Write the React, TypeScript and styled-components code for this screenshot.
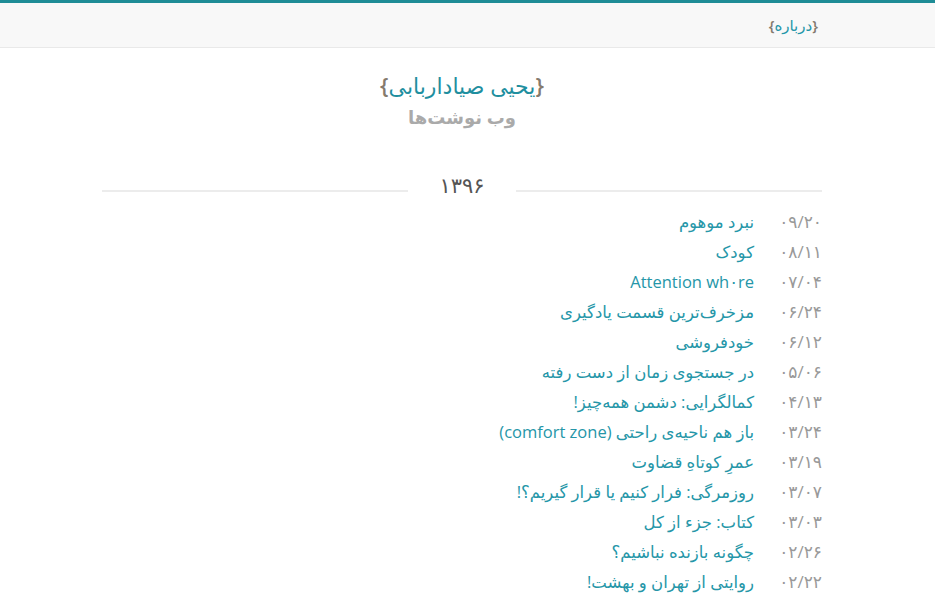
import React from "react";
import styled, { createGlobalStyle } from "styled-components";

const Global = createGlobalStyle`
  html, body { margin: 0; padding: 0; background: #fff; }
  body { font-family: "Open Sans", "DejaVu Sans", sans-serif; }
`;

const Page = styled.div`
  direction: rtl;
  border-top: 3px solid #1e8c96;
`;

const TopBar = styled.header`
  background: #f8f8f8;
  border-bottom: 1px solid #e9e9e9;
  height: 44px;
  display: flex;
  align-items: center;
  padding: 0 117px 0 102px;
`;

const Brace = styled.span`
  color: #857a6d;
  font-weight: 600;
`;

const NavLink = styled.a`
  color: #2596a8;
  font-size: 15px;
  text-decoration: none;
`;

const Main = styled.main`
  padding: 0 113px 0 102px;
`;

const Brand = styled.div`
  display: flex;
  flex-direction: column;
  align-items: center;
  padding-top: 20px;
`;

const SiteTitle = styled.h1`
  margin: 0;
  font-size: 22px;
  font-weight: normal;
  color: #1f8f9f;
  line-height: 34px;
`;

const SiteSub = styled.div`
  font-size: 18px;
  font-weight: bold;
  color: #aaaaaa;
  line-height: 30px;
`;

const YearRow = styled.div`
  display: flex;
  align-items: center;
  gap: 30px;
  margin-top: 38px;
  height: 30px;
`;

const Line = styled.div`
  flex: 1;
  height: 2px;
  background: #ececec;
  margin-top: 12px;
`;

const Year = styled.div`
  font-size: 21px;
  color: #555;
  width: 48px;
  text-align: center;
`;

const List = styled.ul`
  list-style: none;
  margin: 6px 0 0;
  padding: 0;
`;

const Item = styled.li`
  display: flex;
  align-items: center;
  height: 30px;
`;

const Date = styled.span`
  width: 68px;
  text-align: right;
  color: #999;
  font-size: 17px;
  direction: rtl;
`;

const PostLink = styled.a`
  color: #2596a8;
  font-size: 16.5px;
  text-decoration: none;
`;

const posts: [string, string][] = [
  ["۰۹/۲۰", "نبرد موهوم"],
  ["۰۸/۱۱", "کودک"],
  ["۰۷/۰۴", "Attention wh۰re"],
  ["۰۶/۲۴", "مزخرف‌ترین قسمت یادگیری"],
  ["۰۶/۱۲", "خودفروشی"],
  ["۰۵/۰۶", "در جستجوی زمان از دست رفته"],
  ["۰۴/۱۳", "کمالگرایی: دشمن همه‌چیز!"],
  ["۰۳/۲۴", "باز هم ناحیه‌ی راحتی (comfort zone)"],
  ["۰۳/۱۹", "عمرِ کوتاهِ قضاوت"],
  ["۰۳/۰۷", "روزمرگی: فرار کنیم یا قرار گیریم؟!"],
  ["۰۳/۰۳", "کتاب: جزء از کل"],
  ["۰۲/۲۶", "چگونه بازنده نباشیم؟"],
  ["۰۲/۲۲", "روایتی از تهران و بهشت!"],
];

export default function App() {
  return (
    <Page>
      <Global />
      <TopBar>
        <NavLink href="#">
          <Brace>{"{"}</Brace>درباره<Brace>{"}"}</Brace>
        </NavLink>
      </TopBar>
      <Main>
        <Brand>
          <SiteTitle>
            <Brace>{"{"}</Brace>یحیی صیاداربابی<Brace>{"}"}</Brace>
          </SiteTitle>
          <SiteSub>وب نوشت‌ها</SiteSub>
        </Brand>
        <YearRow>
          <Line />
          <Year>۱۳۹۶</Year>
          <Line />
        </YearRow>
        <List>
          {posts.map(([d, t]) => (
            <Item key={d + t}>
              <Date>{d}</Date>
              <PostLink href="#" dir="auto">{t}</PostLink>
            </Item>
          ))}
        </List>
      </Main>
    </Page>
  );
}
